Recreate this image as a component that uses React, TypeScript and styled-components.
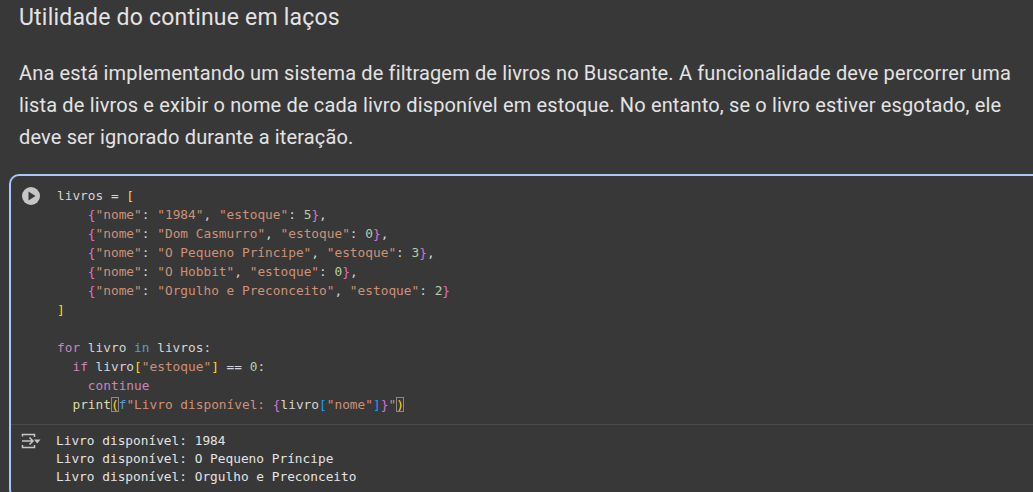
import React from "react";
import styled, { createGlobalStyle } from "styled-components";

const Global = createGlobalStyle`
  html, body { margin: 0; padding: 0; background: #383838; overflow: hidden; }
  #root { height: 492px; }
`;

const Page = styled.main`
  width: 1033px;
  height: 492px;
  overflow: hidden;
  background: #383838;
  color: #e3e3e3;
  font-family: Roboto, "Liberation Sans", sans-serif;
`;

const Heading = styled.h1`
  margin: 0;
  padding: 4px 0 0 19px;
  font-size: 23px;
  letter-spacing: 0.2px;
  line-height: 28px;
  font-weight: 400;
  color: #e3e3e3;
`;

const Paragraph = styled.p`
  margin: 0;
  padding: 25px 0 0 19px;
  font-size: 20px;
  letter-spacing: 0.15px;
  line-height: 32px;
  font-weight: 400;
  color: #e3e3e3;
  white-space: pre;
`;

const Cell = styled.section`
  margin: 21px 0 0 9px;
  height: 325px;
  box-sizing: border-box;
  border: solid #a8c7fa;
  border-width: 2px 0 2px 2px;
  border-top-left-radius: 10px;
  border-bottom-left-radius: 10px;
`;

const CodeRow = styled.div`
  display: flex;
  height: 249px;
  box-sizing: border-box;
  padding: 10px 0 0 11px;
  border-bottom: 1px solid #4a4a4a;
`;

const RunButton = styled.button`
  width: 18px;
  height: 18px;
  flex: none;
  padding: 0;
  margin: 1px 17px 0 0;
  border: 0;
  background: none;
  display: block;
`;

const Code = styled.pre`
  margin: 0;
  font-family: "DejaVu Sans Mono", monospace;
  font-size: 12.8px;
  line-height: 19px;
  color: #d4d4d4;
`;

const Tok = styled.span<{ $c: string; $boxed?: boolean }>`
  color: ${(p) => p.$c};
  ${(p) => (p.$boxed ? "outline: 1px solid #888; outline-offset: -1px;" : "")}
`;

const OutputRow = styled.div`
  display: flex;
  padding: 7px 0 0 10px;
`;

const OutputIcon = styled.svg`
  width: 20px;
  height: 18px;
  flex: none;
  margin: 0 15px 0 0;
`;

const Output = styled.pre`
  margin: 0;
  font-family: "DejaVu Sans Mono", monospace;
  font-size: 12.8px;
  line-height: 18px;
  color: #e3e3e3;
`;

const S = (p: { children: React.ReactNode }) => <Tok $c="#ce9178">{p.children}</Tok>;
const N = (p: { children: React.ReactNode }) => <Tok $c="#b5cea8">{p.children}</Tok>;
const P = (p: { children: React.ReactNode }) => <Tok $c="#da70d6">{p.children}</Tok>;
const Y = (p: { children: React.ReactNode }) => <Tok $c="#ffd700">{p.children}</Tok>;
const B = (p: { children: React.ReactNode }) => <Tok $c="#179fff">{p.children}</Tok>;
const K = (p: { children: React.ReactNode }) => <Tok $c="#c586c0">{p.children}</Tok>;

const Row = ({ name, n, last }: { name: string; n: string; last?: boolean }) => (
  <>
    {"    "}
    <P>{"{"}</P>
    <S>"nome"</S>: <S>"{name}"</S>, <S>"estoque"</S>: <N>{n}</N>
    <P>{"}"}</P>
    {last ? "" : ","}
    {"\n"}
  </>
);

export default function App() {
  return (
    <Page>
      <Global />
      <Heading>Utilidade do continue em laços</Heading>
      <Paragraph>
        {"Ana está implementando um sistema de filtragem de livros no Buscante. A funcionalidade deve percorrer uma\nlista de livros e exibir o nome de cada livro disponível em estoque. No entanto, se o livro estiver esgotado, ele\ndeve ser ignorado durante a iteração."}
      </Paragraph>
      <Cell>
        <CodeRow>
          <RunButton aria-label="Executar">
            <svg width="18" height="18" viewBox="0 0 18 18">
              <circle cx="9" cy="9" r="9" fill="#c4c7c5" />
              <path d="M6.5 4.5 L13.5 9 L6.5 13.5 Z" fill="#383838" />
            </svg>
          </RunButton>
          <Code>
            {"livros = "}
            <Y>[</Y>
            {"\n"}
            <Row name="1984" n="5" />
            <Row name="Dom Casmurro" n="0" />
            <Row name="O Pequeno Príncipe" n="3" />
            <Row name="O Hobbit" n="0" />
            <Row name="Orgulho e Preconceito" n="2" last />
            <Y>]</Y>
            {"\n\n"}
            <K>for</K> livro <Tok $c="#569cd6">in</Tok> livros:{"\n"}
            {"  "}
            <K>if</K> livro<Y>[</Y>
            <S>"estoque"</S>
            <Y>]</Y> == <N>0</N>:{"\n"}
            {"    "}
            <K>continue</K>
            {"\n  "}
            <Tok $c="#dcdcaa">print</Tok>
            <Tok $c="#ffd700" $boxed>(</Tok>
            <Tok $c="#569cd6">f</Tok>
            <S>"Livro disponível: </S>
            <P>{"{"}</P>
            livro
            <B>[</B>
            <S>"nome"</S>
            <B>]</B>
            <P>{"}"}</P>
            <S>"</S>
            <Tok $c="#ffd700" $boxed>)</Tok>
          </Code>
        </CodeRow>
        <OutputRow>
          <OutputIcon viewBox="0 0 20 18" fill="none" stroke="#c4c7c5" strokeWidth="1.5">
            <path d="M1.5 4.5V2.5H13.5V5M1.5 13V15.5H13.5V13M1 9H12M8.5 5.5L12 9L8.5 12.5" />
            <path d="M13 7.5H19.5L16.2 11.5Z" fill="#c4c7c5" stroke="none" />
          </OutputIcon>
          <Output>
            {"Livro disponível: 1984\nLivro disponível: O Pequeno Príncipe\nLivro disponível: Orgulho e Preconceito"}
          </Output>
        </OutputRow>
      </Cell>
    </Page>
  );
}
